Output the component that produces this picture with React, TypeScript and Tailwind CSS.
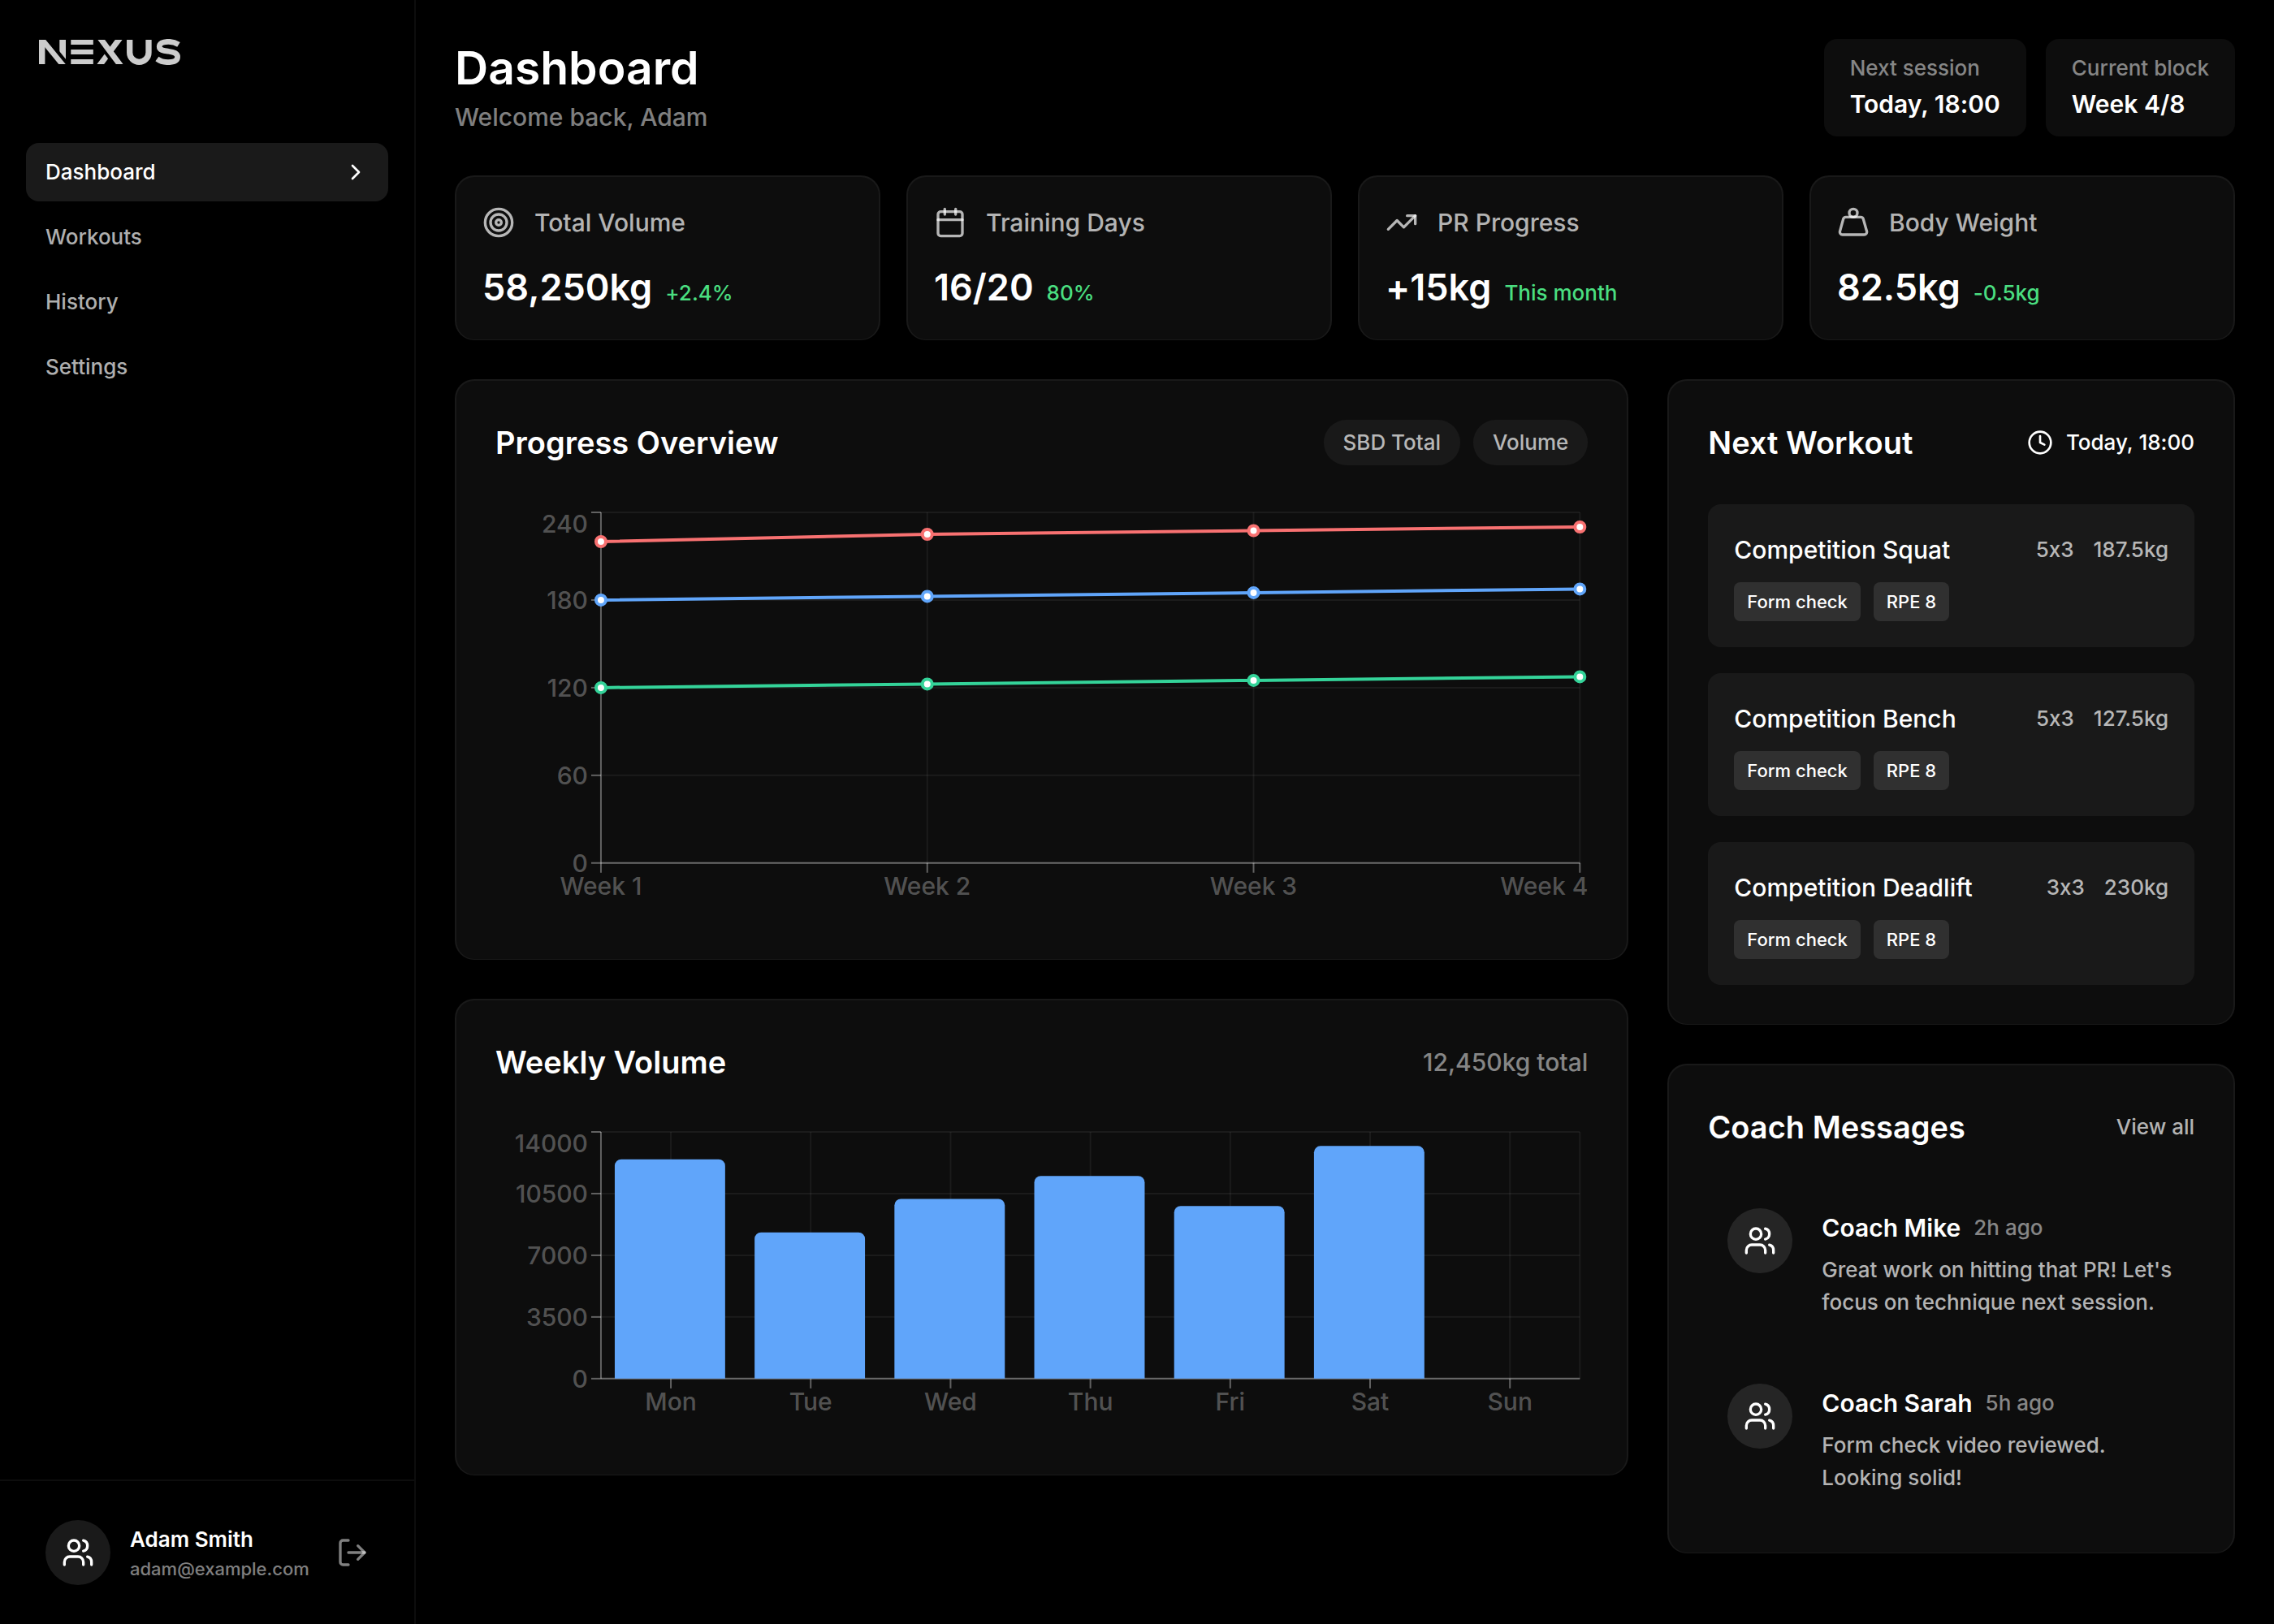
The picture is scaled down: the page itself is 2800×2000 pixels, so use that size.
import React from "react";
import {
  Calendar,
  ChevronRight,
  Clock,
  Target,
  TrendingUp,
  Users,
  Weight,
  type LucideIcon,
} from "lucide-react";

const NAV_ITEMS = ["Dashboard", "Workouts", "History", "Settings"];

const STATS: { label: string; value: string; note: string; icon: LucideIcon }[] = [
  { label: "Total Volume", value: "58,250kg", note: "+2.4%", icon: Target },
  { label: "Training Days", value: "16/20", note: "80%", icon: Calendar },
  { label: "PR Progress", value: "+15kg", note: "This month", icon: TrendingUp },
  { label: "Body Weight", value: "82.5kg", note: "-0.5kg", icon: Weight },
];

const LIFTS = [
  { name: "deadlift", color: "#f87171", values: [220, 225, 227.5, 230] },
  { name: "squat", color: "#60a5fa", values: [180, 182.5, 185, 187.5] },
  { name: "bench", color: "#34d399", values: [120, 122.5, 125, 127.5] },
];

const DAYS = [
  { day: "Mon", volume: 12450 },
  { day: "Tue", volume: 8300 },
  { day: "Wed", volume: 10200 },
  { day: "Thu", volume: 11500 },
  { day: "Fri", volume: 9800 },
  { day: "Sat", volume: 13200 },
  { day: "Sun", volume: 0 },
];

const EXERCISES = [
  { name: "Competition Squat", sets: "5x3", load: "187.5kg" },
  { name: "Competition Bench", sets: "5x3", load: "127.5kg" },
  { name: "Competition Deadlift", sets: "3x3", load: "230kg" },
];

const MESSAGES = [
  {
    coach: "Coach Mike",
    time: "2h ago",
    text: "Great work on hitting that PR! Let's focus on technique next session.",
  },
  { coach: "Coach Sarah", time: "5h ago", text: "Form check video reviewed. Looking solid!" },
];

function Logo() {
  return (
    <svg
      viewBox="0 0 174 32"
      role="img"
      aria-label="NEXUS"
      className="h-8 w-[174px]"
      fill="none"
      stroke="#cccccc"
    >
      <clipPath id="logo-band">
        <rect x="0" y="1" width="140" height="30" />
      </clipPath>
      <g clipPath="url(#logo-band)">
        <rect x="25.3" y="1" width="7.7" height="30" fill="#cccccc" stroke="none" />
        <line x1="-.1" y1="-4" x2="32.6" y2="36" stroke="#000" strokeWidth="14.8" />
        <rect x="0" y="1" width="7.4" height="30" fill="#cccccc" stroke="none" />
        <line x1="-.1" y1="-4" x2="32.6" y2="36" strokeWidth="6.6" />
        <rect x="39.3" y="1" width="27.5" height="6" fill="#cccccc" stroke="none" />
        <rect x="39.3" y="13" width="27.5" height="6" fill="#cccccc" stroke="none" />
        <rect x="39.3" y="25" width="27.5" height="6" fill="#cccccc" stroke="none" />
        <line x1="72" y1="36" x2="87" y2="16" strokeWidth="7" />
        <line x1="79" y1="4" x2="102.9" y2="36" stroke="#000" strokeWidth="14.6" />
        <line x1="87" y1="16" x2="101.9" y2="-4" strokeWidth="7" />
        <line x1="73" y1="-4" x2="102.9" y2="36" strokeWidth="7" />
      </g>
      <path d="M111.7 1V16.7a11.65 11.65 0 0 0 23.3 0V1" strokeWidth="7.3" />
      <path
        d="M172 6.8C168 4.3 164 3.3 159.5 3.3C152 3.3 148.2 5.8 148.2 9.5C148.2 13.8 153.5 14.4 159.5 15.3C166 16.2 170.6 17.5 170.6 22.1C170.6 26.6 166 28.7 159 28.7C153.5 28.7 149 27.2 145.4 24.5"
        strokeWidth="6.7"
      />
    </svg>
  );
}

function LogOutIcon() {
  return (
    <svg
      viewBox="0 0 24 24"
      aria-hidden="true"
      className="size-10"
      fill="none"
      stroke="currentColor"
      strokeWidth="2"
      strokeLinecap="round"
      strokeLinejoin="round"
    >
      <path d="M9 21H5a2 2 0 0 1-2-2V5a2 2 0 0 1 2-2h4" />
      <polyline points="16 17 21 12 16 7" />
      <line x1="21" x2="9" y1="12" y2="12" />
    </svg>
  );
}

function Sidebar() {
  return (
    <aside className="flex w-[512px] shrink-0 flex-col border-r-2 border-white/5">
      <div className="px-12 pt-12 pb-24">
        <Logo />
      </div>
      <nav className="flex flex-1 flex-col gap-2 px-8">
        {NAV_ITEMS.map((item, i) => (
          <a
            key={item}
            href={"#" + item.toLowerCase()}
            aria-current={i === 0 ? "page" : undefined}
            className={
              i === 0
                ? "flex items-center justify-between rounded-2xl bg-white/10 px-6 py-4 text-[26px] leading-10 text-white"
                : "flex items-center justify-between rounded-2xl px-6 py-4 text-[26px] leading-10 text-white/70"
            }
          >
            {item}
            {i === 0 && <ChevronRight className="size-8" />}
          </a>
        ))}
      </nav>
      <div className="flex items-center gap-6 border-t-2 border-white/5 px-14 py-12">
        <Avatar tone="bg-white/10" />
        <div className="min-w-0 flex-1">
          <p className="text-[26px] leading-10 font-semibold">Adam Smith</p>
          <p className="text-[22px] leading-8 text-white/50">adam@example.com</p>
        </div>
        <button type="button" aria-label="Log out" className="text-white/50">
          <LogOutIcon />
        </button>
      </div>
    </aside>
  );
}

function Avatar({ tone }: { tone: string }) {
  return (
    <div className={"flex size-20 shrink-0 items-center justify-center rounded-full " + tone}>
      <Users className="size-10" />
    </div>
  );
}

function Card({
  title,
  action,
  children,
}: {
  title: string;
  action: React.ReactNode;
  children: React.ReactNode;
}) {
  return (
    <section className="rounded-3xl border-2 border-b border-white/5 bg-white/5 p-12">
      <div className="mb-12 flex items-center justify-between">
        <h2 className="text-[38px] leading-14 font-semibold">{title}</h2>
        {action}
      </div>
      {children}
    </section>
  );
}

const LEFT = 130;
const RIGHT = 1336;
const TOP = 10;

function Axes({
  bottom,
  ticks,
  grid,
}: {
  bottom: number;
  ticks: number[];
  grid: number[];
}) {
  const max = ticks[ticks.length - 1];
  const y = (v: number) => bottom - (v / max) * (bottom - TOP);
  return (
    <>
      <g className="stroke-white/6" strokeWidth="2">
        {ticks.map((t) => (
          <line key={t} x1={LEFT} x2={RIGHT} y1={y(t)} y2={y(t)} />
        ))}
        {grid.map((x) => (
          <line key={x} x1={x} x2={x} y1={TOP} y2={bottom} />
        ))}
      </g>
      <g className="stroke-white/35" strokeWidth="2">
        <line x1={LEFT} x2={LEFT} y1={TOP} y2={bottom} />
        <line x1={LEFT} x2={RIGHT} y1={bottom} y2={bottom} />
        {ticks.map((t) => (
          <line key={t} x1={LEFT - 12} x2={LEFT} y1={y(t)} y2={y(t)} />
        ))}
      </g>
      <g className="fill-white/30 text-[30px]" textAnchor="end">
        {ticks.map((t) => (
          <text key={t} x={LEFT - 16} y={t === max ? y(t) + 25 : y(t) + 11}>
            {t}
          </text>
        ))}
      </g>
    </>
  );
}

function ProgressChart() {
  const bottom = 442;
  const xs = [0, 1, 2, 3].map((i) => LEFT + (i * (RIGHT - LEFT)) / 3);
  const y = (v: number) => bottom - (v / 240) * (bottom - TOP);
  return (
    <svg viewBox="0 0 1346 512" role="img" aria-label="Progress by week" className="block w-full">
      <Axes bottom={bottom} ticks={[0, 60, 120, 180, 240]} grid={xs.slice(1)} />
      <g className="stroke-white/35" strokeWidth="2">
        {xs.map((x) => (
          <line key={x} x1={x} x2={x} y1={bottom} y2={bottom + 12} />
        ))}
      </g>
      <g className="fill-white/30 text-[30px]">
        {xs.map((x, i) => (
          <text
            key={x}
            x={i === 3 ? 1346 : x}
            y={bottom + 39}
            textAnchor={i === 3 ? "end" : "middle"}
          >
            {"Week " + (i + 1)}
          </text>
        ))}
      </g>
      {LIFTS.map((lift) => (
        <g key={lift.name} stroke={lift.color} strokeWidth="4">
          <polyline
            fill="none"
            points={lift.values.map((v, i) => xs[i] + "," + y(v)).join(" ")}
          />
          {lift.values.map((v, i) => (
            <circle key={i} cx={xs[i]} cy={y(v)} r="6" fill="#fff" />
          ))}
        </g>
      ))}
    </svg>
  );
}

function VolumeChart() {
  const bottom = 314;
  const band = (RIGHT - LEFT) / DAYS.length;
  const width = 136;
  const center = (i: number) => LEFT + band * (i + 0.5);
  return (
    <svg viewBox="0 0 1346 384" role="img" aria-label="Volume by day" className="block w-full">
      <Axes
        bottom={bottom}
        ticks={[0, 3500, 7000, 10500, 14000]}
        grid={[...DAYS.map((_, i) => center(i)), RIGHT]}
      />
      <g className="stroke-white/35" strokeWidth="2">
        {DAYS.map((d, i) => (
          <line key={d.day} x1={center(i)} x2={center(i)} y1={bottom} y2={bottom + 12} />
        ))}
      </g>
      <g className="fill-white/30 text-[30px]" textAnchor="middle">
        {DAYS.map((d, i) => (
          <text key={d.day} x={center(i)} y={bottom + 39}>
            {d.day}
          </text>
        ))}
      </g>
      {DAYS.filter((d) => d.volume > 0).map((d, i) => {
        const h = (d.volume / 14000) * (bottom - TOP);
        const x = LEFT + band * i + 17;
        return (
          <path
            key={d.day}
            fill="#60a5fa"
            d={`M${x} ${bottom}V${bottom - h + 8}a8 8 0 0 1 8-8h${width - 16}a8 8 0 0 1 8 8V${bottom}Z`}
          />
        );
      })}
    </svg>
  );
}

function Exercise({ name, sets, load }: { name: string; sets: string; load: string }) {
  return (
    <li className="rounded-2xl bg-white/5 p-8">
      <div className="mb-4 flex items-center justify-between">
        <h3 className="text-[30px] leading-12">{name}</h3>
        <div className="flex gap-6 text-[26px] leading-10 text-white/70">
          <span>{sets}</span>
          <span>{load}</span>
        </div>
      </div>
      <div className="flex gap-4">
        {["Form check", "RPE 8"].map((tag) => (
          <span key={tag} className="rounded-lg bg-white/10 px-4 py-2 text-[22px] leading-8">
            {tag}
          </span>
        ))}
      </div>
    </li>
  );
}

export default function App() {
  return (
    <div className="flex min-h-screen bg-black font-['Inter',sans-serif] font-medium text-white [font-feature-settings:'calt'_0]">
      <Sidebar />
      <main className="min-w-0 flex-1 p-12">
        <header className="mb-12 flex items-start justify-between">
          <div>
            <h1 className="text-[57px] leading-18 font-semibold">Dashboard</h1>
            <p className="text-[30px] leading-12 text-white/50">Welcome back, Adam</p>
          </div>
          <div className="flex gap-6">
            {[
              ["Next session", "Today, 18:00"],
              ["Current block", "Week 4/8"],
            ].map(([label, value]) => (
              <div key={label} className="rounded-2xl bg-white/5 px-8 py-4">
                <p className="text-[26px] leading-10 text-white/50">{label}</p>
                <p className="text-[30px] leading-12 font-semibold">{value}</p>
              </div>
            ))}
          </div>
        </header>

        <div className="mb-12 grid grid-cols-4 gap-8">
          {STATS.map(({ label, value, note, icon: Icon }) => (
            <section
              key={label}
              className="rounded-3xl border-2 border-b border-white/5 bg-white/5 p-8"
            >
              <div className="mb-6 flex items-center gap-6 text-white/70">
                <Icon className="size-10" />
                <h2 className="text-[30px] leading-12">{label}</h2>
              </div>
              <div className="flex items-baseline gap-4">
                <span className="text-[45px] leading-16 font-semibold">{value}</span>
                <span className="text-[26px] leading-10 text-[#4ade80]">{note}</span>
              </div>
            </section>
          ))}
        </div>

        <div className="grid grid-cols-3 items-start gap-12">
          <div className="col-span-2 flex flex-col gap-12">
            <Card
              title="Progress Overview"
              action={
                <div className="flex gap-4">
                  {["SBD Total", "Volume"].map((name) => (
                    <button
                      key={name}
                      type="button"
                      className="rounded-full bg-white/5 px-6 py-2 text-[26px] leading-10 text-white/70"
                    >
                      {name}
                    </button>
                  ))}
                </div>
              }
            >
              <ProgressChart />
            </Card>
            <Card
              title="Weekly Volume"
              action={<p className="text-[30px] leading-12 text-white/50">12,450kg total</p>}
            >
              <VolumeChart />
            </Card>
          </div>

          <div className="flex flex-col gap-12">
            <Card
              title="Next Workout"
              action={
                <div className="flex items-center gap-4 text-[26px] leading-10">
                  <Clock className="size-8" />
                  <span>Today, 18:00</span>
                </div>
              }
            >
              <ul className="flex flex-col gap-8">
                {EXERCISES.map((e) => (
                  <Exercise key={e.name} {...e} />
                ))}
              </ul>
            </Card>
            <Card
              title="Coach Messages"
              action={
                <a href="#messages" className="text-[26px] leading-10 text-white/70">
                  View all
                </a>
              }
            >
              <ul className="flex flex-col gap-8">
                {MESSAGES.map((m) => (
                  <li key={m.coach} className="flex gap-9 p-6">
                    <Avatar tone="bg-white/10" />
                    <div className="min-w-0 flex-1">
                      <div className="mb-2 flex items-center gap-4">
                        <h3 className="text-[30px] leading-12 font-semibold">{m.coach}</h3>
                        <span className="text-[26px] leading-10 text-white/50">{m.time}</span>
                      </div>
                      <p className="text-[26px] leading-10 text-white/70">{m.text}</p>
                    </div>
                  </li>
                ))}
              </ul>
            </Card>
          </div>
        </div>
      </main>
    </div>
  );
}
